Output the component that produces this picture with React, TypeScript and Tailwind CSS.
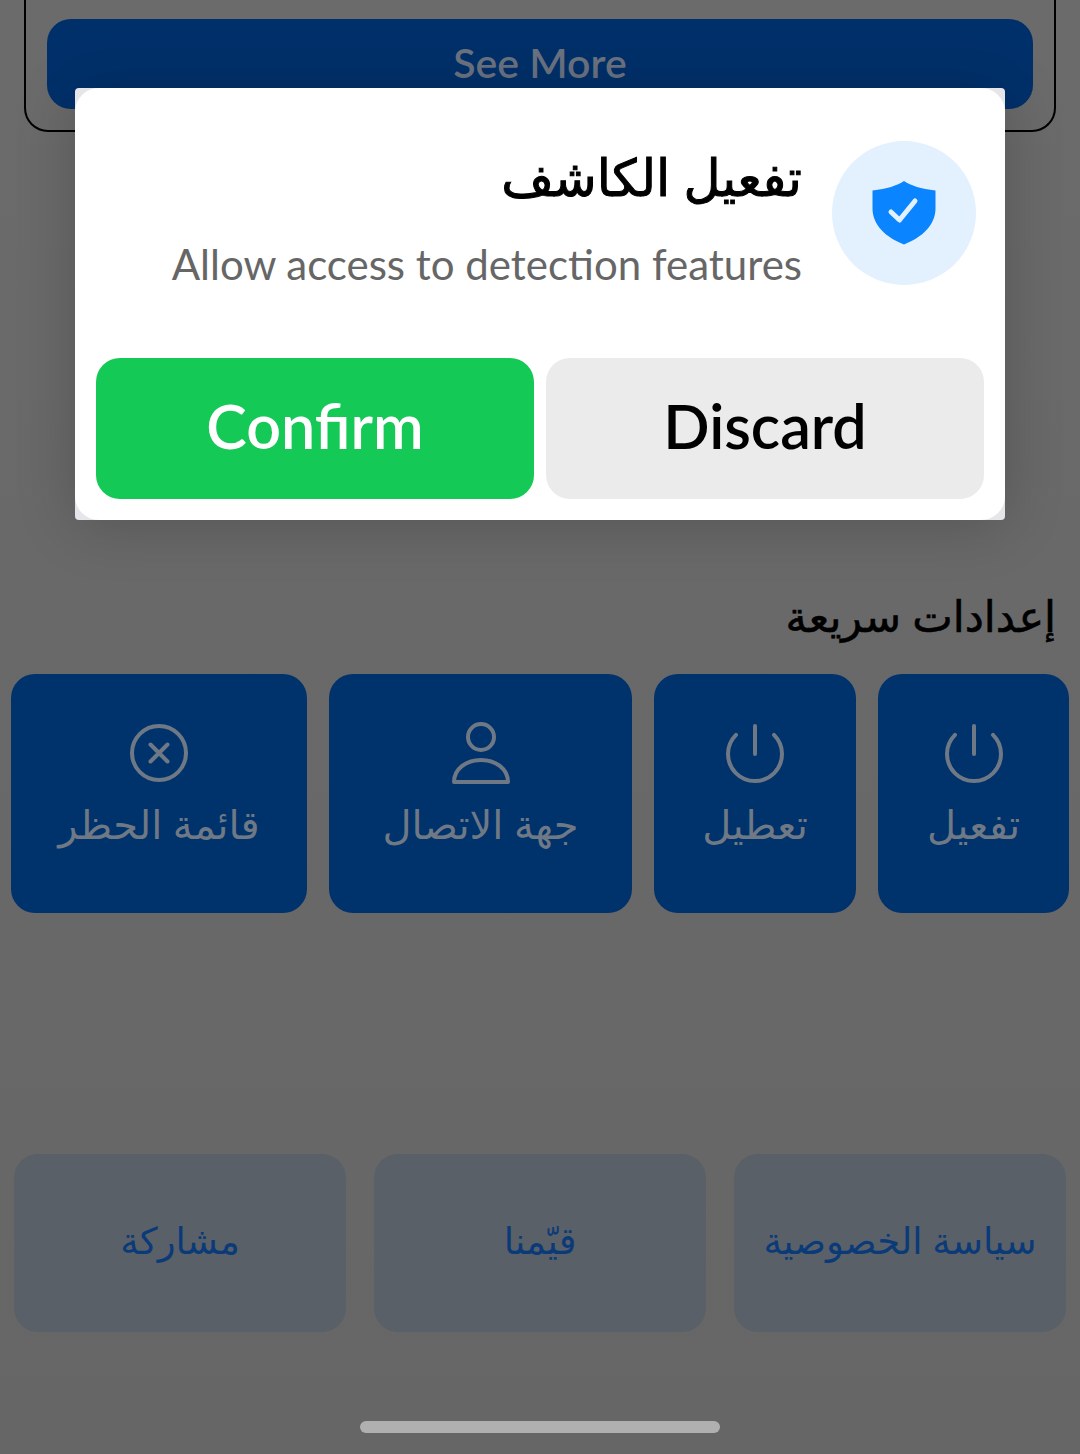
import React from "react";

const latin = "font-['Lato','Noto_Sans',sans-serif]";
const arabic = "font-['Noto_Sans','DejaVu_Sans',sans-serif]";

function Tile({ w, label, children }: { w: string; label: string; children: React.ReactNode }) {
  return (
    <div className={`${w} h-[239px] rounded-[24px] bg-[#00326b] flex flex-col items-center pt-[50px] text-[#6f7986]`}>
      {children}
      <span dir="rtl" className={`${arabic} text-[40px] leading-[50px] mt-[15px]`}>{label}</span>
    </div>
  );
}

function Power() {
  return (
    <svg width="60" height="60" viewBox="0 0 60 60" fill="none" stroke="currentColor" strokeWidth="4" strokeLinecap="round">
      <path d="M11 10.800a27 27 0 1 0 38 0" />
      <path d="M30 2v28" />
    </svg>
  );
}

function Small({ label }: { label: string }) {
  return (
    <div className="w-[332px] h-[178px] rounded-[24px] bg-[#5a6068] flex items-center justify-center">
      <span dir="rtl" className={`${arabic} text-[37px] leading-[48px] text-[#0b3a78] -mt-[7px]`}>{label}</span>
    </div>
  );
}

export default function App() {
  return (
    <div className="relative w-[1080px] h-[1454px] overflow-hidden bg-gradient-to-b from-[#6b6b6b] to-[#666666]">
      <div className="h-[134px] mx-[24px] -mt-[2px] border-2 border-t-0 border-black rounded-b-[24px] px-[21px] pt-[21px]">
        <div className={`${latin} h-[90px] rounded-[24px] bg-[#00306a] text-[#6b7280] text-[41px] font-semibold leading-[87px] text-center`}>See More</div>
      </div>

      <div dir="rtl" className={`${arabic} mt-[456px] px-[24px] text-[43px] leading-[56px] text-black [-webkit-text-stroke:0.6px_black]`}>إعدادات سريعة</div>

      <div className="mt-[30px] mx-[11px] flex gap-[22px]">
        <Tile w="w-[296px]" label="قائمة الحظر">
          <svg width="60" height="60" viewBox="0 0 60 60" fill="none" stroke="currentColor" strokeWidth="4" strokeLinecap="round">
            <circle cx="30" cy="29" r="27" />
            <path d="M21.500 20.500l17 17M38.500 20.500l-17 17" />
          </svg>
        </Tile>
        <Tile w="w-[303px]" label="جهة الاتصال">
          <svg width="60" height="60" viewBox="0 2 60 60" fill="none" stroke="currentColor" strokeWidth="4" strokeLinejoin="round" className="overflow-visible">
            <ellipse cx="30" cy="15" rx="13" ry="13" />
            <path d="M3 60c0-13 12-22 27-22s27 9 27 22z" />
          </svg>
        </Tile>
        <Tile w="w-[202px]" label="تعطيل"><Power /></Tile>
        <Tile w="w-[191px]" label="تفعيل"><Power /></Tile>
      </div>

      <div className="mt-[241px] mx-[14px] flex justify-between">
        <Small label="مشاركة" />
        <Small label="قيّمنا" />
        <Small label="سياسة الخصوصية" />
      </div>

      <div className="mt-[89px] mx-auto w-[360px] h-[12px] rounded-full bg-[#b0b0b0]" />

      <div className="absolute left-[75px] top-[88px] w-[930px] h-[432px] rounded-[4px] bg-[#e6e6ea] shadow-[0_4px_60px_rgba(0,0,0,0.2)]">
        <div className="h-full rounded-[24px] bg-white px-[21px] pt-[53px]">
          <div className="flex justify-end gap-[30px] pr-[8px] h-[217px]">
            <div className="flex flex-col items-end pt-[3px]">
              <div dir="rtl" className={`${arabic} text-[51px] leading-[64px] text-black [-webkit-text-stroke:1px_black]`}>تفعيل الكاشف</div>
              <div className={`${latin} mt-[31px] text-[42px] leading-[50px] text-[#666666]`}>Allow access to detection features</div>
            </div>
            <div className="w-[144px] h-[144px] rounded-full bg-[#e3f0fd] flex items-center justify-center">
              <svg width="64" height="64" viewBox="0 0 64 64">
                <path fill="#0a84ff" d="M32 0c7 4.500 17 8 31.500 9.500v18C63.500 44 50 56.500 32 63.500 14 56.500.5 44 .5 27.500v-18C15 8 25 4.500 32 0z" />
                <path fill="none" stroke="#e3f0fd" strokeWidth="5" strokeLinecap="round" strokeLinejoin="round" d="M19 31l8.500 8L43 20" />
              </svg>
            </div>
          </div>
          <div className="flex gap-[12px]">
            <div className={`${latin} flex-1 h-[141px] pb-[6px] rounded-[24px] bg-[#14c955] text-white text-[61px] font-semibold flex items-center justify-center`}>Confirm</div>
            <div className={`${latin} flex-1 h-[141px] pb-[6px] rounded-[24px] bg-[#ebebeb] text-black text-[61px] font-semibold flex items-center justify-center`}>Discard</div>
          </div>
        </div>
      </div>
    </div>
  );
}
